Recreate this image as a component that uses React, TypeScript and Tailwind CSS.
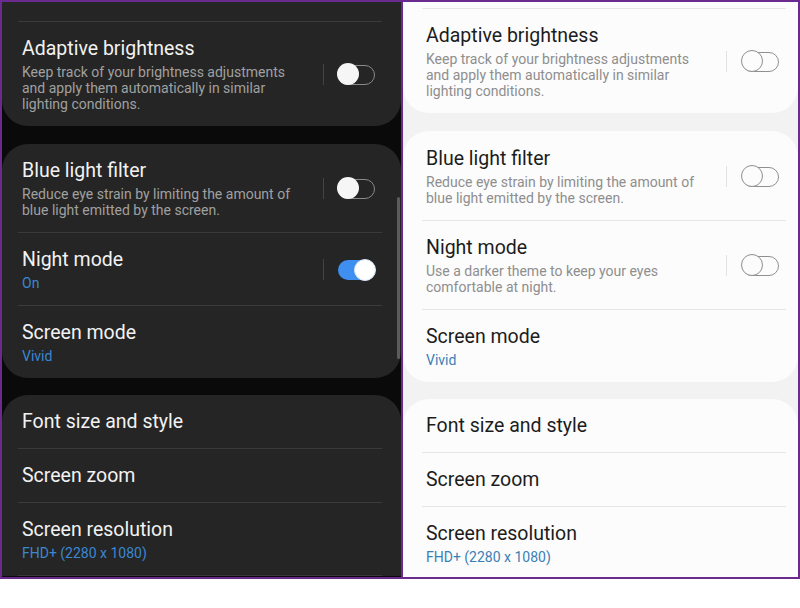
import React from 'react';

type Theme = 'dark' | 'light';

interface Row {
  title: string;
  lines?: string[];
  value?: string;
  toggle?: 'on' | 'off';
}

const palette = {
  dark: {
    card: 'bg-[#252525]',
    title: 'text-[#f2f2f2]',
    sub: 'text-[#a0a0a0]',
    value: 'text-[#3b87d2]',
    line: 'bg-[#3a3a3a]',
    sep: 'bg-[#444444]',
  },
  light: {
    card: 'bg-[#fcfcfc]',
    title: 'text-[#1c1c1c]',
    sub: 'text-[#8e8e8e]',
    value: 'text-[#3a7fb6]',
    line: 'bg-[#e6e6e6]',
    sep: 'bg-[#e2e2e2]',
  },
};

const Toggle: React.FC<{ on: boolean; theme: Theme }> = ({ on, theme }) => {
  if (on) {
    return (
      <div className="relative w-[37px] h-[20px] rounded-full bg-[#3f8ff0]">
        <div className="absolute right-[-1px] top-[-1px] w-[22px] h-[22px] rounded-full bg-white border border-[#d8e6f7]" />
      </div>
    );
  }
  const dark = theme === 'dark';
  return (
    <div className={`relative w-[37px] h-[20px] rounded-full border-[1.5px] ${dark ? 'border-[#8a8a8a]' : 'border-[#8f8f8f]'}`}>
      <div
        className={`absolute left-[-2px] top-[-2.5px] w-[22px] h-[22px] rounded-full ${
          dark ? 'bg-[#f6f6f6]' : 'bg-[#fcfcfc] border-[1.5px] border-[#8f8f8f]'
        }`}
      />
    </div>
  );
};

const SettingRow: React.FC<{ row: Row; theme: Theme; padX: string; toggleGap: string }> = ({ row, theme, padX, toggleGap }) => {
  const c = palette[theme];
  return (
    <div className={`flex items-center pt-[15px] pb-[14px] ${padX}`}>
      <div className="flex-1 min-w-0">
        <div className={`text-[19.5px] leading-[24px] ${c.title}`}>{row.title}</div>
        {row.lines && (
          <div className={`mt-[3px] text-[14px] leading-[16px] ${c.sub}`}>
            {row.lines.map((l) => (
              <div key={l}>{l}</div>
            ))}
          </div>
        )}
        {row.value && <div className={`mt-[3px] text-[14px] leading-[16px] ${c.value}`}>{row.value}</div>}
      </div>
      {row.toggle && (
        <div className={`flex items-center ${toggleGap}`}>
          <div className={`w-px h-[21px] ${c.sep}`} />
          <Toggle on={row.toggle === 'on'} theme={theme} />
        </div>
      )}
    </div>
  );
};

const Card: React.FC<{
  rows: Row[];
  theme: Theme;
  padX: string;
  lineX: string;
  toggleGap: string;
  className?: string;
  topLine?: boolean;
  lastLine?: boolean;
}> = ({ rows, theme, padX, lineX, toggleGap, className = '', topLine, lastLine }) => {
  const c = palette[theme];
  return (
    <div className={`${c.card} ${className}`}>
      {topLine && <div className={`h-px ${c.line} ${lineX}`} />}
      {rows.map((r, i) => (
        <React.Fragment key={r.title}>
          {i > 0 && <div className={`h-px ${c.line} ${lineX}`} />}
          <SettingRow row={r} theme={theme} padX={padX} toggleGap={toggleGap} />
        </React.Fragment>
      ))}
      {lastLine && <div className={`h-px ${c.line} ${lineX}`} />}
    </div>
  );
};

const adaptive: Row = {
  title: 'Adaptive brightness',
  lines: ['Keep track of your brightness adjustments', 'and apply them automatically in similar', 'lighting conditions.'],
  toggle: 'off',
};

const blueLight: Row = {
  title: 'Blue light filter',
  lines: ['Reduce eye strain by limiting the amount of', 'blue light emitted by the screen.'],
  toggle: 'off',
};

const lower: Row[] = [
  { title: 'Font size and style' },
  { title: 'Screen zoom' },
  { title: 'Screen resolution', value: 'FHD+ (2280 x 1080)' },
];

const DarkPanel = () => {
  const props = { theme: 'dark' as Theme, padX: 'pl-[20px] pr-[26px]', lineX: 'ml-[16px] mr-[19px]', toggleGap: 'gap-[14px]' };
  return (
    <div className="relative w-[399px] h-full overflow-hidden bg-[#0a0a0a]">
      <Card {...props} rows={[adaptive]} topLine className="pt-[19px] rounded-b-[26px]" />
      <Card
        {...props}
        rows={[blueLight, { title: 'Night mode', value: 'On', toggle: 'on' }, { title: 'Screen mode', value: 'Vivid' }]}
        className="mt-[18px] rounded-[26px]"
      />
      <Card {...props} rows={lower} lastLine className="mt-[17px] rounded-t-[26px]" />
      {/* scrollbar */}
      <div className="absolute right-[1px] top-[195px] w-[3px] h-[162px] rounded-full bg-[#5c5c5c]" />
    </div>
  );
};

const LightPanel = () => {
  const props = { theme: 'light' as Theme, padX: 'pl-[23px] pr-[19px]', lineX: 'ml-[19px] mr-[12px]', toggleGap: 'gap-[15px]' };
  return (
    <div className="flex-1 h-full overflow-hidden bg-[#f2f2f2]">
      <Card {...props} rows={[adaptive]} topLine className="pt-[6px] rounded-b-[26px]" />
      <Card
        {...props}
        rows={[
          blueLight,
          { title: 'Night mode', lines: ['Use a darker theme to keep your eyes', 'comfortable at night.'], toggle: 'off' },
          { title: 'Screen mode', value: 'Vivid' },
        ]}
        className="mt-[18px] pt-px rounded-[26px]"
      />
      <Card {...props} rows={lower} className="mt-[17px] rounded-t-[26px]" />
    </div>
  );
};

export default function App() {
  return (
    <div className="w-[800px] h-[608px] bg-white" style={{ fontFamily: 'Roboto, "Noto Sans", sans-serif' }}>
      <div className="flex w-[800px] h-[579px] border-2 border-[#6a2a8e] overflow-hidden">
        <DarkPanel />
        <div className="w-[2px] h-full bg-[#6a2a8e]" />
        <LightPanel />
      </div>
    </div>
  );
}
